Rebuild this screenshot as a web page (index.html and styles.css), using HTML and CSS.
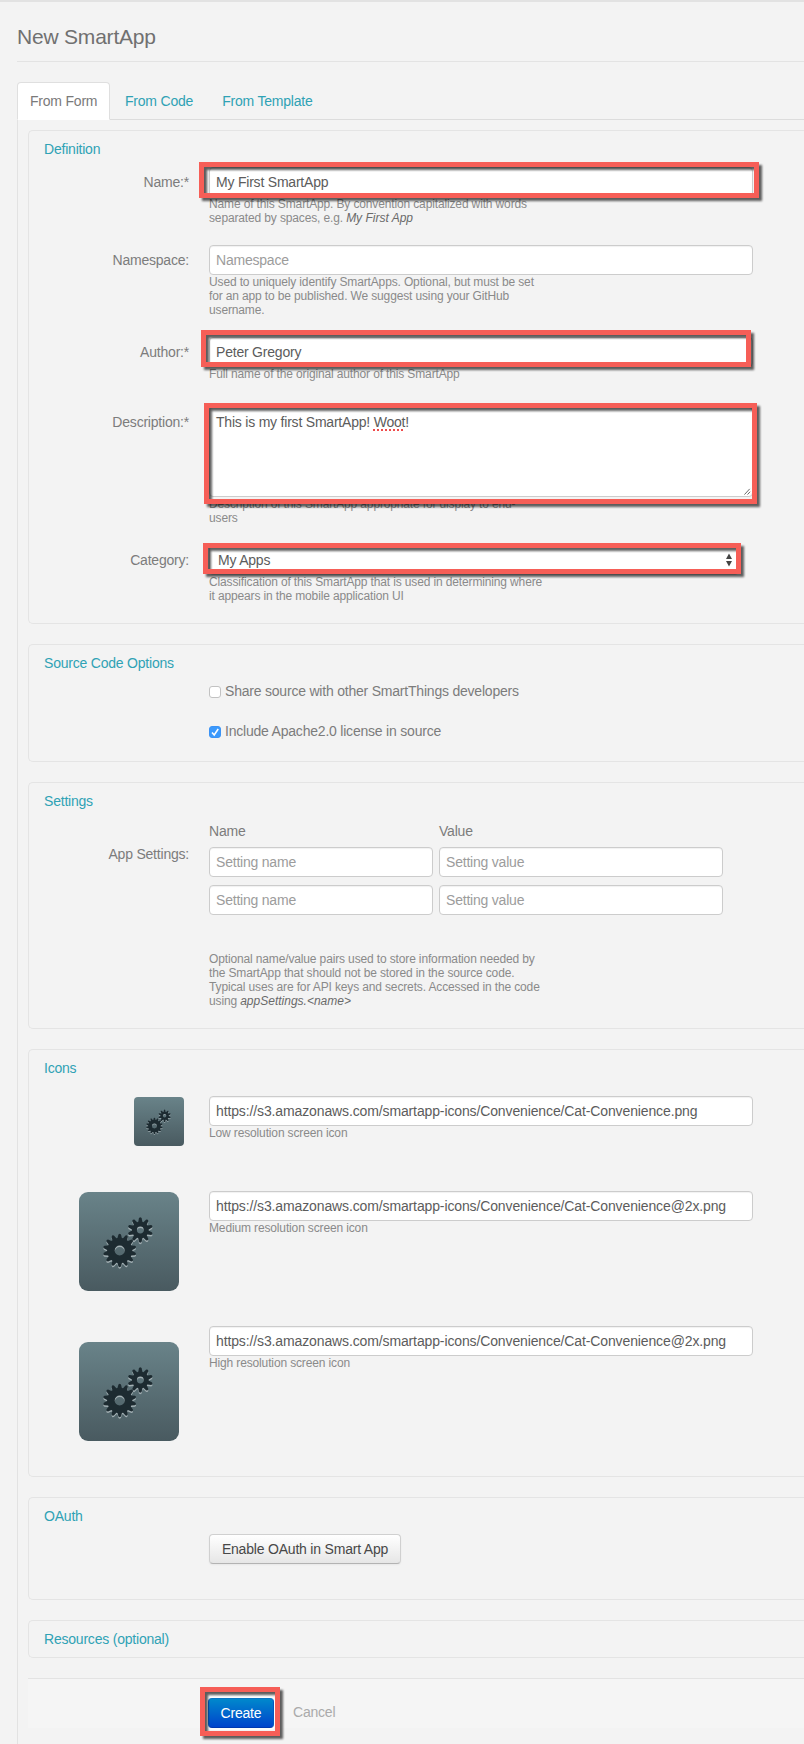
FILE: index.html
```html
<!DOCTYPE html>
<html lang="en">
<head>
<meta charset="utf-8">
<title>New SmartApp</title>
<link rel="stylesheet" href="styles.css">
<script src="gears.js" defer></script>
</head>
<body>
<main class="page">
  <h1 class="title"><span>New SmartApp</span></h1>
  <nav class="tabs">
    <a class="tab active">From Form</a>
    <a class="tab">From Code</a>
    <a class="tab">From Template</a>
  </nav>
  <form class="content">
    <section class="panel definition">
      <h2 class="legend">Definition</h2>
      <div class="row r-name">
        <label class="label">Name:*</label>
        <div class="field">
          <div class="input">My First SmartApp</div>
          <p class="help">Name of this SmartApp. By convention capitalized with words<br>separated by spaces, e.g. <em>My First App</em></p>
          <i class="mark m-name"></i>
        </div>
      </div>
      <div class="row r-namespace">
        <label class="label">Namespace:</label>
        <div class="field">
          <div class="input placeholder">Namespace</div>
          <p class="help">Used to uniquely identify SmartApps. Optional, but must be set<br>for an app to be published. We suggest using your GitHub<br>username.</p>
        </div>
      </div>
      <div class="row r-author">
        <label class="label">Author:*</label>
        <div class="field">
          <div class="input">Peter Gregory</div>
          <p class="help">Full name of the original author of this SmartApp</p>
          <i class="mark m-author"></i>
        </div>
      </div>
      <div class="row r-description">
        <label class="label">Description:*</label>
        <div class="field">
          <div class="input area">This is my first SmartApp! <span class="typo">Woot</span>!
            <svg class="grip" viewBox="0 0 8 8"><path d="M.5 7.5 6.5 1M4 7.5 7 4.3"/></svg>
          </div>
          <p class="help">Description of this SmartApp appropriate for display to end-<br>users</p>
          <i class="mark m-description"></i>
        </div>
      </div>
      <div class="row r-category">
        <label class="label">Category:</label>
        <div class="field">
          <div class="input select">My Apps
            <svg class="arrows" viewBox="0 0 8 14"><path d="M4 .5 7 6H1zM4 13.5 7 8H1z"/></svg>
          </div>
          <p class="help">Classification of this SmartApp that is used in determining where<br>it appears in the mobile application UI</p>
          <i class="mark m-category"></i>
        </div>
      </div>
    </section>

    <section class="panel source">
      <h2 class="legend">Source Code Options</h2>
      <div class="check"><span class="box"></span><span>Share source with other SmartThings developers</span></div>
      <div class="check"><span class="box on"><svg viewBox="0 0 12 12"><path d="M3 6.5 5.2 9 9.2 3"/></svg></span><span>Include Apache2.0 license in source</span></div>
    </section>

    <section class="panel settings">
      <h2 class="legend">Settings</h2>
      <div class="row">
        <label class="label">App Settings:</label>
        <div class="field">
          <div class="pairs">
            <span class="head">Name</span><span class="head">Value</span>
            <div class="input placeholder">Setting name</div><div class="input placeholder">Setting value</div>
            <div class="input placeholder">Setting name</div><div class="input placeholder">Setting value</div>
          </div>
          <p class="help">Optional name/value pairs used to store information needed by<br>the SmartApp that should not be stored in the source code.<br>Typical uses are for API keys and secrets. Accessed in the code<br>using <em>appSettings.&lt;name&gt;</em></p>
        </div>
      </div>
    </section>

    <section class="panel icons">
      <h2 class="legend">Icons</h2>
      <div class="row r-low">
        <div class="thumb small"></div>
        <div class="field">
          <div class="input url">https://s3.amazonaws.com/smartapp-icons/Convenience/Cat-Convenience.png</div>
          <p class="help">Low resolution screen icon</p>
        </div>
      </div>
      <div class="row r-medium">
        <div class="thumb"></div>
        <div class="field">
          <div class="input url">https://s3.amazonaws.com/smartapp-icons/Convenience/Cat-Convenience@2x.png</div>
          <p class="help">Medium resolution screen icon</p>
        </div>
      </div>
      <div class="row r-high">
        <div class="thumb"></div>
        <div class="field">
          <div class="input url">https://s3.amazonaws.com/smartapp-icons/Convenience/Cat-Convenience@2x.png</div>
          <p class="help">High resolution screen icon</p>
        </div>
      </div>
    </section>

    <section class="panel oauth">
      <h2 class="legend">OAuth</h2>
      <button type="button" class="button">Enable OAuth in Smart App</button>
    </section>

    <section class="panel resources">
      <h2 class="legend">Resources (optional)</h2>
    </section>

    <footer class="actions">
      <div class="create-wrap">
        <button type="button" class="button primary">Create</button>
        <i class="mark m-create"></i>
      </div>
      <a class="cancel">Cancel</a>
    </footer>
  </form>
</main>
</body>
</html>
```

FILE: styles.css
```css
* { box-sizing: border-box; }
body {
  margin: 0;
  background: #f3f3f3;
  color: #7c7c7c;
  font: 14px/20px "Liberation Sans", Arial, sans-serif;
  letter-spacing: -0.21px;
  width: 804px;
  height: 1744px;
  overflow: hidden;
}
h1, h2, p { margin: 0; font-weight: normal; }
.page { border-top: 2px solid #e2e2e2; padding-left: 17px; }
.title {
  height: 60px;
  padding-top: 20px;
  border-bottom: 1px solid #e3e3e3;
  font-size: 21px;
  line-height: 30px;
  letter-spacing: -0.2px;
  color: #707070;
}
.tabs {
  display: flex;
  gap: 2px;
  height: 58px;
  padding-top: 20px;
  border-bottom: 1px solid #dcdcdc;
}
.tab { height: 38px; padding: 8px 13px 0 12px; border: 1px solid transparent; color: #2fa2b5; white-space: nowrap; }
.tab.active {
  background: #fff;
  border-color: #dfdfdf #dfdfdf #fff;
  border-radius: 4px 4px 0 0;
  color: #7a7a7a;
  width: 93px;
}
.content {
  border-left: 1px solid #e2e2e2;
  height: 1624px;
  padding: 10px 0 0 10px;
  display: flex;
  flex-direction: column;
}
.panel {
  flex: none;
  border: 1px solid #e4e4e4;
  border-right: 0;
  border-radius: 5px 0 0 5px;
  padding: 8px 0 0 15px;
  margin-bottom: 20px;
}
.legend { height: 20px; font-size: 14px; color: #2fa2b5; }
.row { display: grid; grid-template-columns: 145px 544px; column-gap: 20px; align-content: start; align-items: start; }
.label { text-align: right; padding-top: 5px; }
.field { position: relative; }
.input {
  height: 30px;
  padding: 4px 6px;
  background: #fff;
  border: 1px solid #ccc;
  border-radius: 4px;
  box-shadow: inset 0 1px 1px rgba(0, 0, 0, .06);
  color: #5c5c5c;
  white-space: nowrap;
}
.url { letter-spacing: -0.125px; }
.placeholder { color: #9c9c9c; }
.help { font-size: 12px; line-height: 14px; letter-spacing: -0.14px; color: #8a8a8a; white-space: nowrap; }
.help em { color: #6a6a6a; letter-spacing: 0; }

.definition { height: 494px; }
.definition .legend { margin-bottom: 8px; }
.r-name { height: 78px; }
.r-namespace { height: 92px; }
.r-author { height: 70px; }
.r-description { height: 138px; }
.area { height: 90px; position: relative; }
.typo { text-decoration: underline dotted #ef4b4b 2px; text-underline-offset: 2px; }
.grip { position: absolute; right: 1px; bottom: 1px; width: 7px; height: 7px; fill: none; stroke: #555; }
.select { display: flex; justify-content: space-between; align-items: center; width: 530px; padding: 0 5px 0 8px; }
.arrows { width: 8px; height: 14px; fill: #444; }

/* Highlight rings drawn over the fields */
.mark { position: absolute; border: 5px solid #f65e57; filter: drop-shadow(3px 3px 1px rgba(0, 0, 0, .62)); pointer-events: none; }
.m-name { left: -10px; top: -5px; width: 560px; height: 36px; }
.m-author { left: -8px; top: -7px; width: 550px; height: 37px; }
.m-description { left: -5px; top: -4px; width: 553px; height: 101px; }
.m-category { left: -6px; top: -2px; width: 538px; height: 31px; }
.m-create { left: -8px; top: -11px; width: 80px; height: 49px; }

.source { height: 118px; }
.source .legend { margin-bottom: 8px; }
.check { display: flex; gap: 4px; height: 20px; margin: 0 0 20px 165px; align-items: center; }
.box { width: 12px; height: 12px; border: 1px solid #c2c2c2; border-radius: 3px; background: #fff; margin-top: 2px; }
.box.on { background: #3b99fc; border-color: #3b93f5; display: flex; }
.box svg { width: 12px; height: 12px; margin: -1px; fill: none; stroke: #fff; stroke-width: 1.6; flex: none; }

.settings { height: 247px; }
.settings .legend { margin-bottom: 10px; }
.settings .label { padding-top: 23px; }
.pairs { display: grid; grid-template-columns: 224px 284px; grid-template-rows: 26px 38px 30px; align-items: start; column-gap: 6px; margin-bottom: 37px; }

.icons { height: 428px; }
.icons .legend { margin-bottom: 18px; }
.r-low { height: 95px; }
.r-medium { height: 135px; }
.thumb { width: 100px; height: 99px; justify-self: end; margin: 1px 10px 0 0; border-radius: 9px; background: linear-gradient(#698389, #495a60); }
.r-high .thumb { margin-top: 16px; }
.thumb.small { width: 50px; height: 49px; margin-right: 5px; border-radius: 4px; }
.thumb svg { display: block; width: 100%; height: 100%; }
.gear { fill: #1d2b31; fill-rule: evenodd; }
.glint { fill: #a3b0b4; fill-rule: evenodd; }

.oauth { height: 103px; }
.oauth .button { margin: 8px 0 0 165px; width: 192px; }
.button {
  display: block;
  height: 30px;
  padding: 0;
  font: 14px/20px "Liberation Sans", Arial, sans-serif;
  letter-spacing: -0.2px;
  color: #484848;
  border: 1px solid #d0d0d0;
  border-bottom-color: #b3b3b3;
  border-radius: 4px;
  background: linear-gradient(#fff, #e6e6e6);
  box-shadow: 0 1px 2px rgba(0, 0, 0, .05);
}
.resources { height: 38px; }
.actions { flex: none; display: flex; gap: 19px; height: 50px; padding: 19px 0 0 180px; border-top: 1px solid #e3e3e3; background: #f5f5f5; }
.create-wrap { position: relative; height: 30px; }
.primary { width: 66px; color: #fff; border-color: #0675c4 #0458c0 #0038b0; background: linear-gradient(#0088cc, #0044cc); box-shadow: 0 0 0 2px #fcfcfc; }
.cancel { padding-top: 4px; color: #aaa; }
```

FILE: gears.js
```js
// Builds a toothed wheel with rounded teeth and a round hub hole.
function gear(cx, cy, outer, root, hole, teeth) {
  const points = [];
  const at = (r, a) => (cx + r * Math.cos(a)).toFixed(2) + ' ' + (cy + r * Math.sin(a)).toFixed(2);
  for (let i = 0; i < teeth; i++) {
    const a = (i / teeth) * 2 * Math.PI - Math.PI / 2;
    const s = Math.PI / teeth;
    points.push(at(root, a - s * 0.8), at(outer - 0.8, a - s * 0.35), at(outer, a), at(outer - 0.8, a + s * 0.35), at(root, a + s * 0.8));
  }
  return 'M' + points.join('L') + 'Z M' + (cx - hole) + ' ' + cy +
    'a' + hole + ' ' + hole + ' 0 1 0 ' + 2 * hole + ' 0a' + hole + ' ' + hole + ' 0 1 0 ' + -2 * hole + ' 0';
}
const wheels = [gear(40.7, 58.5, 16.8, 12.6, 5, 14), gear(61.3, 38, 12.8, 8.4, 3.4, 10)];
document.querySelectorAll('.thumb').forEach((el) => {
  el.innerHTML = '<svg viewBox="0 0 100 99">' +
    wheels.map((d) => '<path class="glint" transform="translate(0 1.5)" d="' + d + '"/>').join('') +
    wheels.map((d) => '<path class="gear" d="' + d + '"/>').join('') + '</svg>';
});
```
